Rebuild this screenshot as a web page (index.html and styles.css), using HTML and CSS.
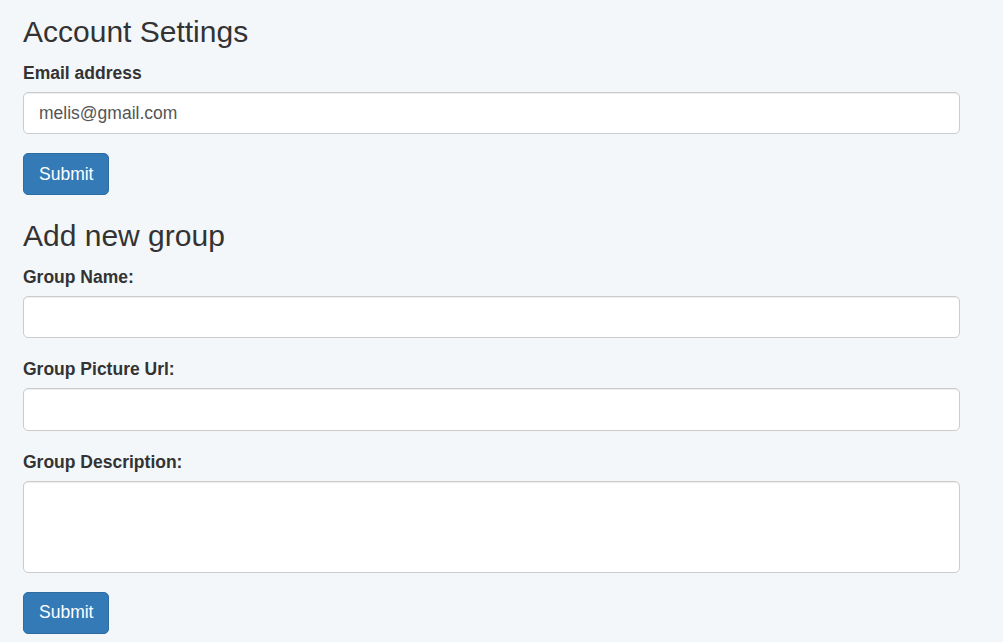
FILE: index.html
```html
<!DOCTYPE html>
<html>
<head>
<meta charset="utf-8">
<link rel="stylesheet" href="styles.css">
</head>
<body>
<main class="page">
  <h3 class="title first">Account Settings</h3>
  <form class="form">
    <div class="form-group">
      <label class="label">Email address</label>
      <input class="control" type="email" value="melis@gmail.com">
    </div>
    <button class="btn" type="button">Submit</button>
  </form>
  <h3 class="title">Add new group</h3>
  <form class="form">
    <div class="form-group">
      <label class="label">Group Name:</label>
      <input class="control" type="text">
    </div>
    <div class="form-group">
      <label class="label">Group Picture Url:</label>
      <input class="control" type="text">
    </div>
    <div class="form-group">
      <label class="label">Group Description:</label>
      <textarea class="control area" rows="3"></textarea>
    </div>
    <button class="btn" type="button">Submit</button>
  </form>
</main>
</body>
</html>
```

FILE: styles.css
```css
* { box-sizing: border-box; }
html, body {
  margin: 0;
  padding: 0;
  background: #f4f7fa;
}
body {
  font-family: "Liberation Sans", Arial, sans-serif;
  font-size: 17.5px;
  line-height: 25px;
  color: #333;
}
.page {
  padding: 0 43px 0 23px;
  width: 1003px;
}
.title {
  font-size: 30px;
  line-height: 33px;
  font-weight: 400;
  margin: 24px 0 12.5px;
}
.title.first {
  margin-top: 15px;
}
.form {
  margin: 0;
  display: flex;
  flex-direction: column;
  align-items: flex-start;
}
.form-group {
  width: 100%;
  margin-bottom: 18.75px;
  display: flex;
  flex-direction: column;
}
.label {
  font-weight: 700;
  margin-bottom: 6.25px;
}
.control {
  display: block;
  width: 100%;
  height: 42.5px;
  padding: 7.5px 15px;
  font-family: inherit;
  font-size: 17.5px;
  line-height: 25px;
  color: #555;
  background: #fff;
  border: 1px solid #ccc;
  border-radius: 5px;
  box-shadow: inset 0 1px 1px rgba(0,0,0,.075);
  margin: 0;
}
.area {
  height: 92px;
  resize: none;
}
.btn {
  font-family: inherit;
  font-size: 17.5px;
  line-height: 25px;
  padding: 7.5px 15px;
  color: #fff;
  background: #337ab7;
  border: 1px solid #2e6da4;
  border-radius: 5px;
  margin: 0;
  cursor: pointer;
}
```
